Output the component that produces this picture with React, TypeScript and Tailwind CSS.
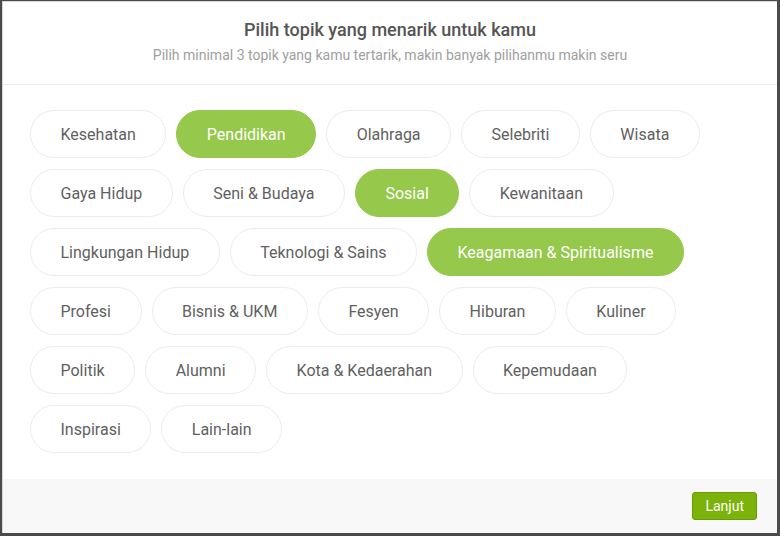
const topics = [
  { label: "Kesehatan", on: false },
  { label: "Pendidikan", on: true },
  { label: "Olahraga", on: false },
  { label: "Selebriti", on: false },
  { label: "Wisata", on: false },
  { label: "Gaya Hidup", on: false },
  { label: "Seni & Budaya", on: false },
  { label: "Sosial", on: true },
  { label: "Kewanitaan", on: false },
  { label: "Lingkungan Hidup", on: false },
  { label: "Teknologi & Sains", on: false },
  { label: "Keagamaan & Spiritualisme", on: true },
  { label: "Profesi", on: false },
  { label: "Bisnis & UKM", on: false },
  { label: "Fesyen", on: false },
  { label: "Hiburan", on: false },
  { label: "Kuliner", on: false },
  { label: "Politik", on: false },
  { label: "Alumni", on: false },
  { label: "Kota & Kedaerahan", on: false },
  { label: "Kepemudaan", on: false },
  { label: "Inspirasi", on: false },
  { label: "Lain-lain", on: false },
]

export default function App() {
  return (
    <div className="h-[536px] w-[780px] bg-[#4b4b4b] pl-[2px] pt-[1px] pr-[3px] pb-[3px] font-['Roboto',sans-serif]">
      <div className="flex h-full flex-col border-l border-t border-[#d6d6d6] bg-white">
        {/* header */}
        <div className="flex h-[83px] flex-col items-center border-b border-[#ececec] pt-[16px]">
          <h1 className="text-[18px] font-medium leading-6 text-[#555555]">Pilih topik yang menarik untuk kamu</h1>
          <p className="mt-[3px] text-[14px] leading-5 text-[#a0a0a0]">
            Pilih minimal 3 topik yang kamu tertarik, makin banyak pilihanmu makin seru
          </p>
        </div>

        {/* topics */}
        <div className="flex flex-1 flex-wrap content-start gap-x-[10px] gap-y-[11px] pl-[27px] pr-[28px] pt-[25px]">
          {topics.map((t) => (
            <button
              key={t.label}
              className={
                t.on
                  ? "flex h-[48px] items-center rounded-full border border-[#95c84b] bg-[#95c84b] px-[29.5px] pt-[2px] text-[16px] text-white"
                  : "flex h-[48px] items-center rounded-full border border-[#ececec] bg-white px-[29.5px] pt-[2px] text-[16px] text-[#5f5f5f]"
              }
            >
              {t.label}
            </button>
          ))}
        </div>

        {/* footer */}
        <div className="flex h-[54px] items-center justify-end bg-[#f8f8f8] pr-[20px]">
          <button className="h-[28px] rounded-[3px] border border-[#6a9b06] bg-[#7cb30b] px-[12px] text-[14px] text-white">
            Lanjut
          </button>
        </div>
      </div>
    </div>
  )
}
